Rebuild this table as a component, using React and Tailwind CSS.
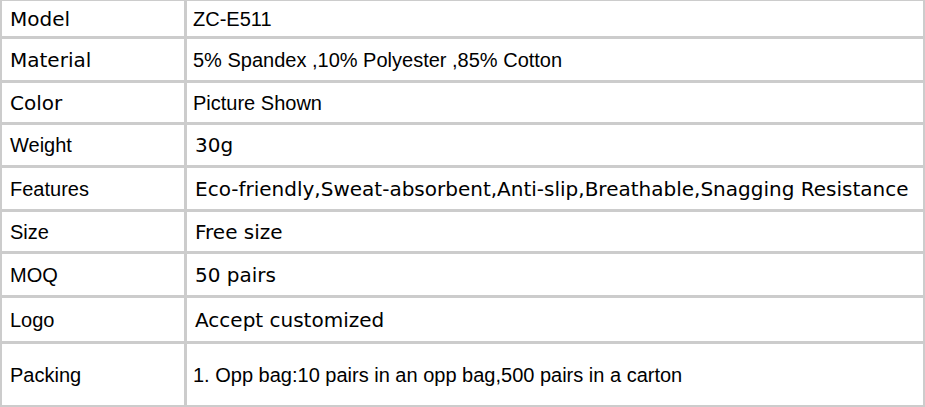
const A = "font-['Liberation_Sans',Arial,sans-serif]";
const D = "font-['DejaVu_Sans',Verdana,sans-serif]";

const rows = [
  { k: "Model", kf: D, v: "ZC-E511", vf: A, h: "h-[35px]" },
  { k: "Material", kf: D, v: "5% Spandex ,10% Polyester ,85% Cotton", vf: A, h: "h-[41px]" },
  { k: "Color", kf: D, v: "Picture Shown", vf: A, h: "h-[39px]" },
  { k: "Weight", kf: A, v: "30g", vf: D, h: "h-[40px]" },
  { k: "Features", kf: A, v: "Eco-friendly,Sweat-absorbent,Anti-slip,Breathable,Snagging Resistance", vf: D, h: "h-[41px]" },
  { k: "Size", kf: A, v: "Free size", vf: D, h: "h-[39px]" },
  { k: "MOQ", kf: A, v: "50 pairs", vf: D, h: "h-[41px]" },
  { k: "Logo", kf: A, v: "Accept customized", vf: D, h: "h-[43px]" },
  { k: "Packing", kf: A, v: "1. Opp bag:10 pairs in an opp bag,500 pairs in a carton", vf: A, h: "h-[61px]" },
];

export default function App() {
  return (
    <div className="w-[925px] h-[407px] bg-white">
      <div className="grid grid-cols-[182px_1fr] gap-[3px] bg-[#cccccc] pt-px px-[2px] pb-[2px] text-[20px] text-black leading-none">
        {rows.map((r) => [
          <div key={r.k + "k"} className={`${r.h} bg-white flex items-center pl-[8px] whitespace-nowrap ${r.kf}`}>
            {r.k}
          </div>,
          <div
            key={r.k + "v"}
            className={`${r.h} bg-white flex items-center whitespace-nowrap ${r.vf} ${r.vf === D ? "pl-[8px]" : "pl-[6px]"}`}
          >
            {r.v}
          </div>,
        ])}
      </div>
    </div>
  );
}
